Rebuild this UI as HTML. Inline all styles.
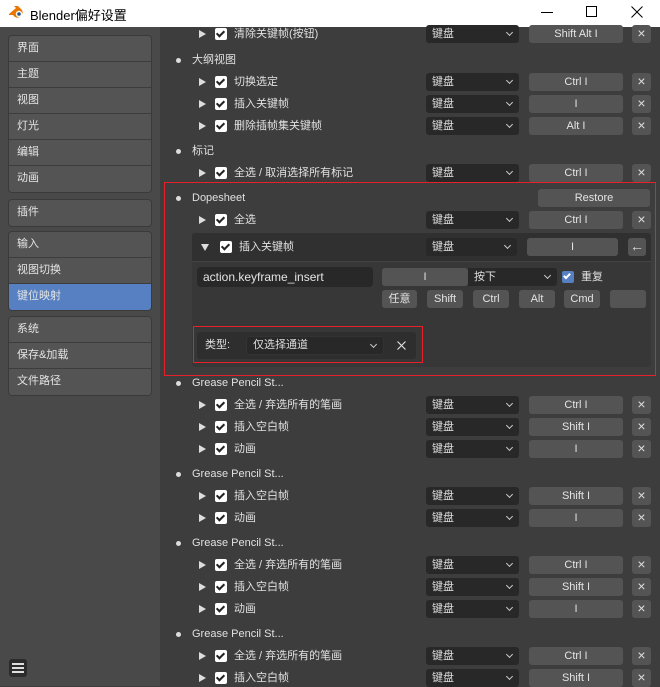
<!DOCTYPE html>
<html><head><meta charset="utf-8"><style>
*{box-sizing:border-box;margin:0;padding:0}
body{width:660px;height:686px;overflow:hidden;background:#3d3d3d;font-family:"Liberation Sans","Noto Sans CJK SC",sans-serif;font-size:11px;color:#e0e0e0;position:relative}
.a{position:absolute}
#tb{left:0;top:0;width:660px;height:27px;background:#fff;color:#000;font-size:13px}
#side{left:0;top:27px;width:160px;height:659px;background:#494949}
.g{position:absolute;left:8px;width:144px;border:1px solid #3a3a3a;border-radius:4px;overflow:hidden;background:#545454}
.g div{height:26px;line-height:25px;padding-left:8px;border-bottom:1px solid #3d3d3d;font-size:11px;color:#e4e4e4}
.g div:last-child{border-bottom:none}
.sel{background:#5680c2}
.tri{position:absolute;width:0;height:0;border-left:7px solid #ddd;border-top:4px solid transparent;border-bottom:4px solid transparent}
.cb{position:absolute;width:12px;height:12px;background:#fff;border-radius:2px}
.cb:after{content:"";position:absolute;left:3px;top:1px;width:3px;height:6px;border:solid #222;border-width:0 2px 2px 0;transform:rotate(45deg)}
.lbl{position:absolute;white-space:nowrap;line-height:14px}
.dd{position:absolute;background:#282828;border-radius:3px;height:18px;line-height:18px;padding-left:6px;color:#ddd}
.dd:after{content:"";position:absolute;right:7px;top:5px;width:4px;height:4px;border:solid #ccc;border-width:0 1.3px 1.3px 0;transform:rotate(45deg)}
.btn{position:absolute;background:#545454;border-radius:3px;height:18px;line-height:18px;text-align:center;color:#e4e4e4}
.x{position:absolute;background:#545454;border-radius:3px;width:19px;height:18px;line-height:17px;text-align:center;color:#ddd;font-size:14px}
.dot{position:absolute;width:5px;height:5px;border-radius:50%;background:#ddd}
</style></head><body>
<div id="tb" class="a">
<svg class="a" style="left:8px;top:5px" width="18" height="16" viewBox="0 0 18 16"><path d="M1 9 L8 3 L6 1 L10 1 L14 5 A5 5 0 1 1 5 10 L1 10Z" fill="#ea7600"/><circle cx="11" cy="9" r="3.2" fill="#fff"/><circle cx="11" cy="9" r="1.8" fill="#265787"/></svg>
<span class="a" style="left:30px;top:5px">Blender偏好设置</span>
<div class="a" style="left:541px;top:12px;width:12px;height:1px;background:#000"></div>
<div class="a" style="left:586px;top:6px;width:11px;height:11px;border:1px solid #000"></div>
<svg class="a" style="left:631px;top:6px" width="12" height="12" viewBox="0 0 12 12"><path d="M0.5 0.5L11.5 11.5M11.5 0.5L0.5 11.5" stroke="#000" stroke-width="1"/></svg>
</div>
<div id="side" class="a"></div>
<div class="g" style="top:35px"><div>界面</div><div>主题</div><div>视图</div><div>灯光</div><div>编辑</div><div>动画</div></div>
<div class="g" style="top:199px"><div>插件</div></div>
<div class="g" style="top:231px"><div>输入</div><div>视图切换</div><div class="sel">键位映射</div></div>
<div class="g" style="top:316px"><div>系统</div><div>保存&amp;加载</div><div>文件路径</div></div>
<div class="a" style="left:9px;top:659px;width:18px;height:18px;background:#2b2b2b;border-radius:3px"><div class="a" style="left:3px;top:4px;width:12px;height:2px;background:#ddd"></div><div class="a" style="left:3px;top:8px;width:12px;height:2px;background:#ddd"></div><div class="a" style="left:3px;top:12px;width:12px;height:2px;background:#ddd"></div></div>

<div class="a" style="left:164px;top:182px;width:492px;height:194px;border:1px solid #e8202a"></div>
<div class="a" style="left:192px;top:233px;width:459px;height:134px;background:#373737;border-radius:3px"></div>
<div class="a" style="left:192px;top:233px;width:459px;height:28px;background:#303030;border-radius:3px 3px 0 0"></div>
<div class="a" style="left:192px;top:261px;width:459px;height:1px;background:#444"></div>

<div class="tri" style="left:199px;top:30px"></div><div class="cb" style="left:215px;top:28px"></div><span class="lbl" style="left:234px;top:27px">清除关键帧(按钮)</span><div class="dd" style="left:426px;top:25px;width:93px">键盘</div><div class="btn" style="left:529px;top:25px;width:94px">Shift Alt I</div><div class="x" style="left:632px;top:25px">×</div>

<div class="dot" style="left:176px;top:58px"></div><span class="lbl" style="left:192px;top:53px">大纲视图</span>
<div class="tri" style="left:199px;top:78px"></div><div class="cb" style="left:215px;top:76px"></div><span class="lbl" style="left:234px;top:75px">切换选定</span><div class="dd" style="left:426px;top:73px;width:93px">键盘</div><div class="btn" style="left:529px;top:73px;width:94px">Ctrl I</div><div class="x" style="left:632px;top:73px">×</div>
<div class="tri" style="left:199px;top:100px"></div><div class="cb" style="left:215px;top:98px"></div><span class="lbl" style="left:234px;top:97px">插入关键帧</span><div class="dd" style="left:426px;top:95px;width:93px">键盘</div><div class="btn" style="left:529px;top:95px;width:94px">I</div><div class="x" style="left:632px;top:95px">×</div>
<div class="tri" style="left:199px;top:122px"></div><div class="cb" style="left:215px;top:120px"></div><span class="lbl" style="left:234px;top:119px">删除插帧集关键帧</span><div class="dd" style="left:426px;top:117px;width:93px">键盘</div><div class="btn" style="left:529px;top:117px;width:94px">Alt I</div><div class="x" style="left:632px;top:117px">×</div>

<div class="dot" style="left:176px;top:149px"></div><span class="lbl" style="left:192px;top:144px">标记</span>
<div class="tri" style="left:199px;top:169px"></div><div class="cb" style="left:215px;top:167px"></div><span class="lbl" style="left:234px;top:166px">全选 / 取消选择所有标记</span><div class="dd" style="left:426px;top:164px;width:93px">键盘</div><div class="btn" style="left:529px;top:164px;width:94px">Ctrl I</div><div class="x" style="left:632px;top:164px">×</div>

<div class="dot" style="left:176px;top:196px"></div><span class="lbl" style="left:192px;top:191px">Dopesheet</span><div class="btn" style="left:538px;top:189px;width:112px">Restore</div>
<div class="tri" style="left:199px;top:216px"></div><div class="cb" style="left:215px;top:214px"></div><span class="lbl" style="left:234px;top:213px">全选</span><div class="dd" style="left:426px;top:211px;width:93px">键盘</div><div class="btn" style="left:529px;top:211px;width:94px">Ctrl I</div><div class="x" style="left:632px;top:211px">×</div>

<div class="a" style="left:201px;top:244px;width:0;height:0;border-top:7px solid #ddd;border-left:4px solid transparent;border-right:4px solid transparent"></div>
<div class="cb" style="left:220px;top:241px"></div><span class="lbl" style="left:239px;top:240px">插入关键帧</span>
<div class="dd" style="left:426px;top:238px;width:91px">键盘</div><div class="btn" style="left:527px;top:238px;width:91px">I</div><div class="x" style="left:628px;top:238px;width:18px;font-size:14px">←</div>

<div class="a" style="left:197px;top:267px;width:176px;height:20px;background:#282828;border-radius:4px;line-height:20px;padding-left:6px;color:#e4e4e4;font-size:12px">action.keyframe_insert</div>
<div class="btn" style="left:382px;top:268px;width:86px">I</div>
<div class="dd" style="left:468px;top:268px;width:89px;border-radius:0 3px 3px 0">按下</div>
<div class="a" style="left:562px;top:271px;width:12px;height:12px;background:#5680c2;border-radius:2px"></div><div class="a" style="left:565px;top:272px;width:4px;height:7px;border:solid #fff;border-width:0 2px 2px 0;transform:rotate(45deg)"></div>
<span class="lbl" style="left:581px;top:270px">重复</span>
<div class="btn" style="left:382px;top:290px;width:35px">任意</div>
<div class="btn" style="left:427px;top:290px;width:36px">Shift</div>
<div class="btn" style="left:473px;top:290px;width:36px">Ctrl</div>
<div class="btn" style="left:519px;top:290px;width:36px">Alt</div>
<div class="btn" style="left:564px;top:290px;width:36px">Cmd</div>
<div class="btn" style="left:610px;top:290px;width:36px"></div>

<div class="a" style="left:193px;top:326px;width:230px;height:37px;border:1px solid #e8202a"></div>
<div class="a" style="left:197px;top:332px;width:219px;height:27px;background:#2e2e2e;border-radius:3px"></div>
<span class="lbl" style="left:205px;top:338px">类型:</span>
<div class="dd" style="left:246px;top:336px;width:138px;height:19px;background:#282828;border:1px solid #333;line-height:17px">仅选择通道</div>
<svg class="a" style="left:397px;top:341px" width="9" height="9" viewBox="0 0 9 9"><path d="M0.5 0.5L8.5 8.5M8.5 0.5L0.5 8.5" stroke="#ddd" stroke-width="1.2"/></svg>

<div class="dot" style="left:176px;top:381px"></div><span class="lbl" style="left:192px;top:376px">Grease Pencil St...</span>
<div class="tri" style="left:199px;top:401px"></div><div class="cb" style="left:215px;top:399px"></div><span class="lbl" style="left:234px;top:398px">全选 / 弃选所有的笔画</span><div class="dd" style="left:426px;top:396px;width:93px">键盘</div><div class="btn" style="left:529px;top:396px;width:94px">Ctrl I</div><div class="x" style="left:632px;top:396px">×</div>
<div class="tri" style="left:199px;top:423px"></div><div class="cb" style="left:215px;top:421px"></div><span class="lbl" style="left:234px;top:420px">插入空白帧</span><div class="dd" style="left:426px;top:418px;width:93px">键盘</div><div class="btn" style="left:529px;top:418px;width:94px">Shift I</div><div class="x" style="left:632px;top:418px">×</div>
<div class="tri" style="left:199px;top:445px"></div><div class="cb" style="left:215px;top:443px"></div><span class="lbl" style="left:234px;top:442px">动画</span><div class="dd" style="left:426px;top:440px;width:93px">键盘</div><div class="btn" style="left:529px;top:440px;width:94px">I</div><div class="x" style="left:632px;top:440px">×</div>

<div class="dot" style="left:176px;top:472px"></div><span class="lbl" style="left:192px;top:467px">Grease Pencil St...</span>
<div class="tri" style="left:199px;top:492px"></div><div class="cb" style="left:215px;top:490px"></div><span class="lbl" style="left:234px;top:489px">插入空白帧</span><div class="dd" style="left:426px;top:487px;width:93px">键盘</div><div class="btn" style="left:529px;top:487px;width:94px">Shift I</div><div class="x" style="left:632px;top:487px">×</div>
<div class="tri" style="left:199px;top:514px"></div><div class="cb" style="left:215px;top:512px"></div><span class="lbl" style="left:234px;top:511px">动画</span><div class="dd" style="left:426px;top:509px;width:93px">键盘</div><div class="btn" style="left:529px;top:509px;width:94px">I</div><div class="x" style="left:632px;top:509px">×</div>

<div class="dot" style="left:176px;top:541px"></div><span class="lbl" style="left:192px;top:536px">Grease Pencil St...</span>
<div class="tri" style="left:199px;top:561px"></div><div class="cb" style="left:215px;top:559px"></div><span class="lbl" style="left:234px;top:558px">全选 / 弃选所有的笔画</span><div class="dd" style="left:426px;top:556px;width:93px">键盘</div><div class="btn" style="left:529px;top:556px;width:94px">Ctrl I</div><div class="x" style="left:632px;top:556px">×</div>
<div class="tri" style="left:199px;top:583px"></div><div class="cb" style="left:215px;top:581px"></div><span class="lbl" style="left:234px;top:580px">插入空白帧</span><div class="dd" style="left:426px;top:578px;width:93px">键盘</div><div class="btn" style="left:529px;top:578px;width:94px">Shift I</div><div class="x" style="left:632px;top:578px">×</div>
<div class="tri" style="left:199px;top:605px"></div><div class="cb" style="left:215px;top:603px"></div><span class="lbl" style="left:234px;top:602px">动画</span><div class="dd" style="left:426px;top:600px;width:93px">键盘</div><div class="btn" style="left:529px;top:600px;width:94px">I</div><div class="x" style="left:632px;top:600px">×</div>

<div class="dot" style="left:176px;top:632px"></div><span class="lbl" style="left:192px;top:627px">Grease Pencil St...</span>
<div class="tri" style="left:199px;top:652px"></div><div class="cb" style="left:215px;top:650px"></div><span class="lbl" style="left:234px;top:649px">全选 / 弃选所有的笔画</span><div class="dd" style="left:426px;top:647px;width:93px">键盘</div><div class="btn" style="left:529px;top:647px;width:94px">Ctrl I</div><div class="x" style="left:632px;top:647px">×</div>
<div class="tri" style="left:199px;top:674px"></div><div class="cb" style="left:215px;top:672px"></div><span class="lbl" style="left:234px;top:671px">插入空白帧</span><div class="dd" style="left:426px;top:669px;width:93px">键盘</div><div class="btn" style="left:529px;top:669px;width:94px">Shift I</div><div class="x" style="left:632px;top:669px">×</div>
</body></html>
